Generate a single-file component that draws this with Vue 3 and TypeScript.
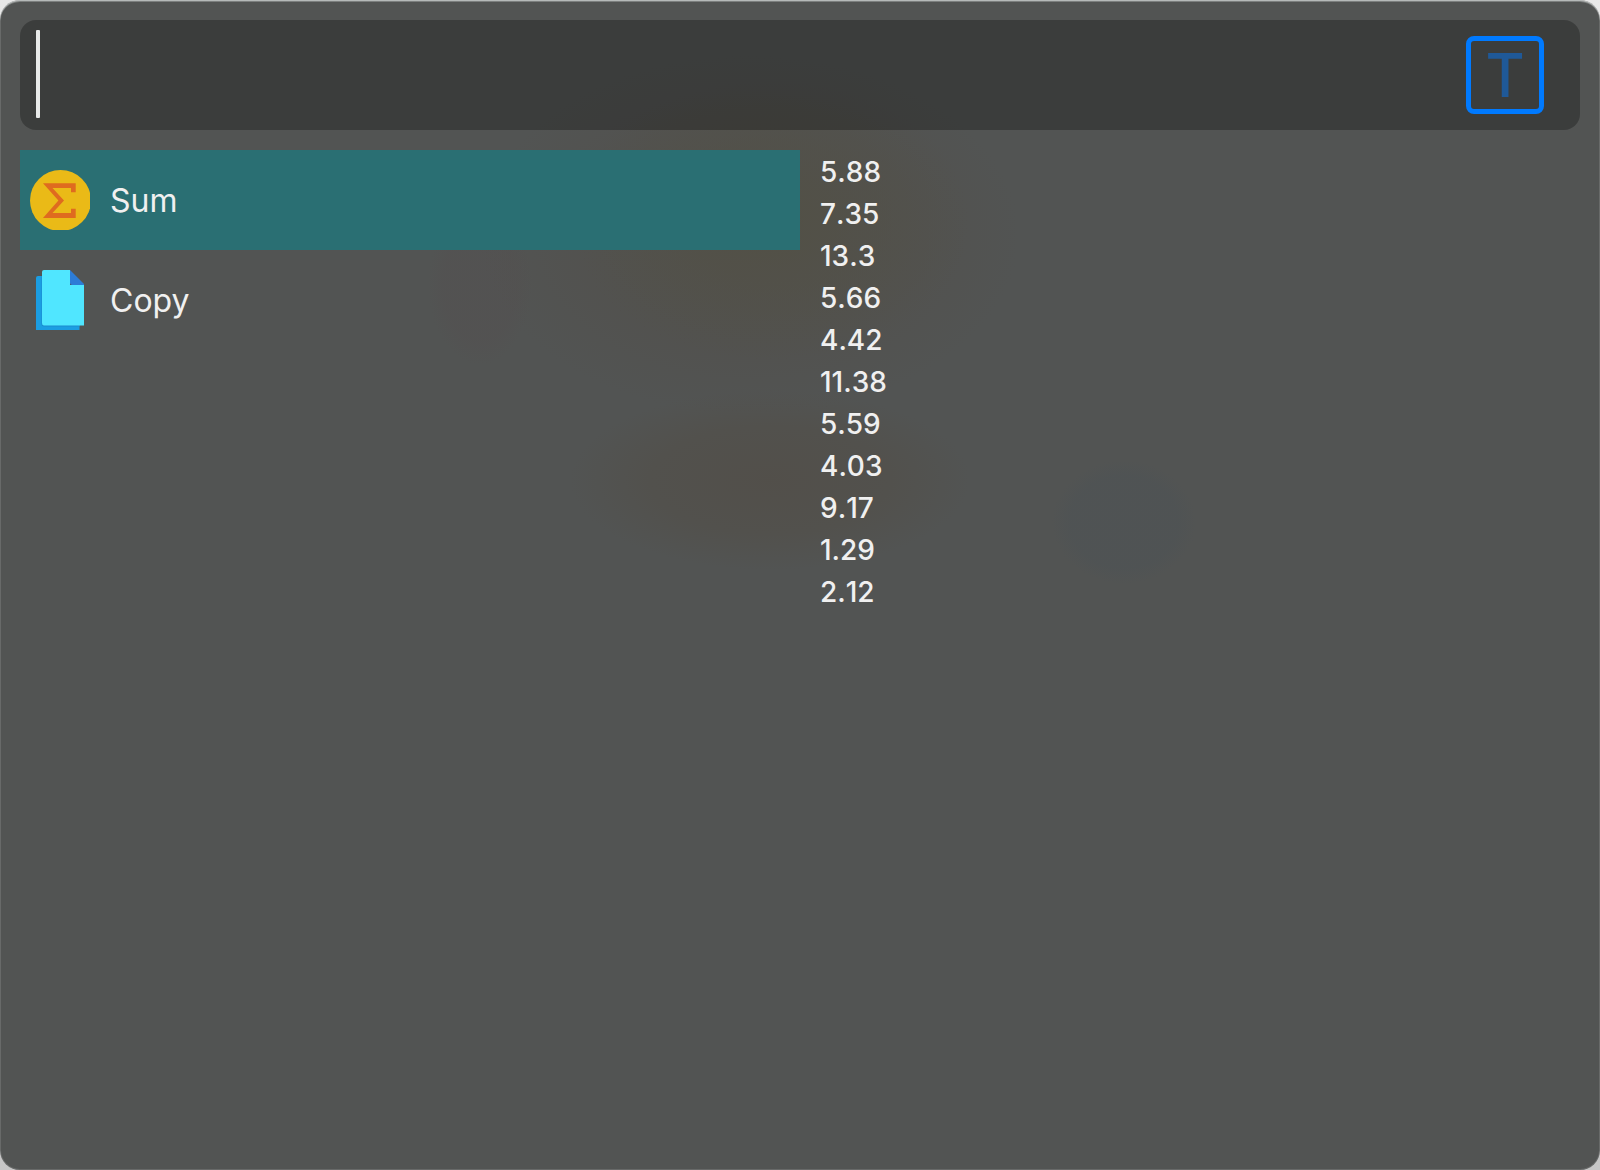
<script setup lang="ts">
import { ref } from 'vue'

interface Action {
  id: 'sum' | 'copy'
  label: string
}

const actions: Action[] = [
  { id: 'sum', label: 'Sum' },
  { id: 'copy', label: 'Copy' },
]

const values: string[] = [
  '5.88', '7.35', '13.3', '5.66', '4.42', '11.38',
  '5.59', '4.03', '9.17', '1.29', '2.12',
]

const query = ref('')
const selected = ref<Action['id']>('sum')
</script>

<template>
  <main class="launcher">
    <div class="search">
      <span v-if="!query" class="caret" aria-hidden="true"></span>
      <input v-model="query" class="query" type="text" aria-label="Search actions" />
      <span class="type-badge">T</span>
    </div>

    <div class="content">
      <nav class="actions">
        <button
          v-for="action in actions"
          :key="action.id"
          type="button"
          class="action"
          :class="{ selected: action.id === selected }"
          @click="selected = action.id"
        >
          <svg v-if="action.id === 'sum'" class="icon" viewBox="0 0 60 60" aria-hidden="true">
            <circle cx="30.5" cy="30.5" r="30.5" fill="#eaba17" />
            <path
              d="M13 13.2H45.7V22.3H41V18H22.5L34 30.5L22.5 43H41V38.8H45.7V48H13L28.4 30.5Z"
              fill="#df6b1f"
            />
          </svg>
          <svg v-else class="icon" viewBox="0 0 60 60" aria-hidden="true">
            <path d="M8 6H30V40H49.5V60H6V8Q6 6 8 6Z" fill="#1b9de2" />
            <path d="M11.5 6H30V40H49.5V56.5H14Q11.5 56.5 11.5 54Z" fill="#1a8bce" />
            <path d="M14 0H40V15H54V55.5H14Q12 55.5 12 53V2Q12 0 14 0Z" fill="#50e6ff" />
            <path d="M40 0L54 14V15H42.5Q40 15 40 12.5Z" fill="#2d7cd6" />
          </svg>
          <span class="label">{{ action.label }}</span>
        </button>
      </nav>

      <ul class="values">
        <li v-for="value in values" :key="value">{{ value }}</li>
      </ul>
    </div>
  </main>
</template>

<style>
body {
  margin: 0;
  background: linear-gradient(#e8e8e8, #c6c6c6);
}
</style>

<style scoped>
.launcher {
  box-sizing: border-box;
  min-height: 100vh;
  padding: 20px;
  border-radius: 20px;
  color: #f0f0f0;
  font-family: Inter, "Liberation Sans", sans-serif;
  background:
    radial-gradient(ellipse 200px 140px at 770px 220px, rgba(82, 79, 64, 0.5), rgba(82, 80, 69, 0.4) 55%, transparent),
    radial-gradient(ellipse 270px 180px at 750px 235px, rgba(82, 80, 72, 0.7), rgba(82, 80, 76, 0.5) 65%, transparent),
    radial-gradient(ellipse 200px 90px at 770px 480px, rgba(82, 78, 72, 0.8), rgba(82, 79, 73, 0.6) 60%, transparent),
    radial-gradient(ellipse 52px 80px at 480px 285px, rgba(83, 81, 81, 0.6) 70%, transparent),
    radial-gradient(ellipse 72px 62px at 1124px 522px, rgba(79, 83, 84, 0.9) 75%, transparent),
    #525453;
  box-shadow:
    inset 0 1px #b5b9b8,
    inset 0 2px #7c7f7e,
    inset 0 0 0 1px #686a69;
}

.search {
  display: flex;
  align-items: center;
  box-sizing: border-box;
  height: 110px;
  padding: 0 36px 0 16px;
  border-radius: 16px;
  background: rgba(0, 0, 0, 0.27);
}

.caret {
  width: 4px;
  height: 88px;
  margin-bottom: 2px;
  border-radius: 1px;
  background: #e8eae9;
}

.query {
  flex: 1;
  min-width: 0;
  height: 88px;
  padding: 0;
  border: 0;
  outline: 0;
  background: transparent;
  color: inherit;
  caret-color: #e8eae9;
  font: inherit;
  font-size: 60px;
}

.type-badge {
  box-sizing: border-box;
  width: 78px;
  height: 78px;
  border: 5px solid #007aff;
  border-radius: 8px;
  color: #1f5998;
  font-size: 60px;
  font-weight: 500;
  line-height: 68px;
  text-align: center;
}

.content {
  display: grid;
  grid-template-columns: 1fr 1fr;
  margin-top: 20px;
}

.actions {
  display: flex;
  flex-direction: column;
}

.action {
  display: flex;
  align-items: center;
  gap: 20px;
  height: 100px;
  padding: 0 10px;
  border: 0;
  background: transparent;
  color: inherit;
  font: inherit;
  font-size: 32px;
  line-height: 40px;
  text-align: left;
}

.action.selected {
  background: #2a6f73;
}

.icon {
  flex: none;
  width: 60px;
  height: 60px;
}

.label {
  padding-top: 2px;
}

.values {
  margin: 0;
  padding: 1px 20px 0;
  list-style: none;
  font-size: 28px;
  font-weight: 500;
  font-kerning: none;
  line-height: 42px;
}
</style>
